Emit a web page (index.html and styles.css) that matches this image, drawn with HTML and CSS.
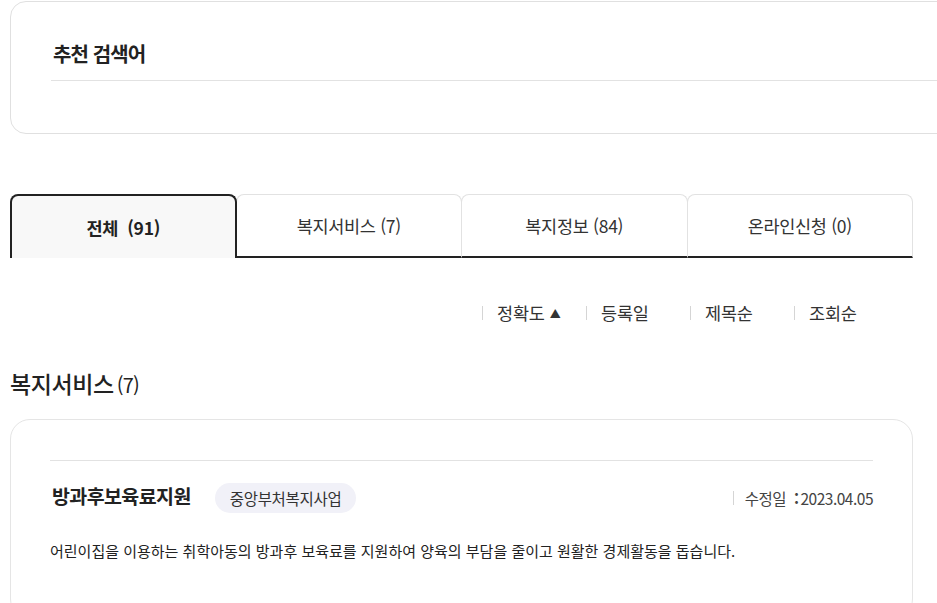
FILE: index.html
```html
<!DOCTYPE html>
<html lang="ko">
<head>
<meta charset="utf-8">
<link rel="stylesheet" href="styles.css">
</head>
<body>
<div class="page">
  <section class="recommend">
    <h2 class="recommend-title">추천 검색어</h2>
    <div class="recommend-line"></div>
  </section>

  <nav class="tabs">
    <div class="tab active">전체&nbsp; (91)</div>
    <div class="tab">복지서비스 (7)</div>
    <div class="tab">복지정보 (84)</div>
    <div class="tab">온라인신청 (0)</div>
  </nav>

  <div class="sort">
    <span class="sort-item">정확도 <span class="tri">▲</span></span>
    <span class="sort-item">등록일</span>
    <span class="sort-item">제목순</span>
    <span class="sort-item">조회순</span>
  </div>

  <h3 class="section-title">복지서비스<span class="count">(7)</span></h3>

  <article class="card">
    <div class="card-line"></div>
    <div class="card-head">
      <div class="card-left">
        <span class="card-title">방과후보육료지원</span>
        <span class="badge">중앙부처복지사업</span>
      </div>
      <div class="card-date">수정일 <span class="colon">:</span>2023.04.05</div>
    </div>
    <p class="card-desc">어린이집을 이용하는 취학아동의 방과후 보육료를 지원하여 양육의 부담을 줄이고 원활한 경제활동을 돕습니다.</p>
  </article>
</div>
</body>
</html>
```

FILE: styles.css
```css
* { box-sizing: border-box; }
html, body { margin: 0; padding: 0; background: #fff; overflow: hidden; }
body {
  font-family: "Noto Sans CJK KR", "Noto Sans", sans-serif;
  color: #222;
}
.page {
  padding: 1px 0 0 10px;
  width: 913px;
}
.recommend {
  width: 960px;
  height: 133px;
  border: 1px solid #e0e0e0;
  border-radius: 16px;
  padding: 34px 0 0 40px;
}
.recommend-title {
  margin: 0 0 0 2px;
  font-size: 20px;
  font-weight: 700;
  line-height: 36px;
  color: #222;
  letter-spacing: -0.9px;
}
.recommend-line {
  margin-top: 8px;
  height: 1px;
  background: #e2e2e2;
}
.tabs {
  display: flex;
  margin-top: 60px;
  height: 64px;
}
.tab {
  flex: 1 1 25%;
  min-width: 0;
  display: flex;
  align-items: center;
  justify-content: center;
  border: 1px solid #e2e2e2;
  border-bottom: 2px solid #222;
  border-radius: 8px 8px 0 0;
  font-size: 17.5px;
  color: #333;
  letter-spacing: -0.3px;
  padding-top: 0;
}
.tab + .tab { margin-left: -1px; }
.tab.active {
  border: 2px solid #222;
  border-bottom: none;
  background: #f8f8f8;
  font-weight: 700;
  color: #222;
  position: relative;
  z-index: 1;
}
.sort {
  display: flex;
  justify-content: flex-end;
  margin-top: 42px;
  height: 26px;
  padding-right: 15px;
}
.sort-item {
  width: 104px;
  display: flex;
  align-items: center;
  font-size: 17.5px;
  color: #333;
  line-height: 26px;
  padding-left: 15px;
  position: relative;
  letter-spacing: -0.2px;
}
.sort-item::before {
  content: "";
  position: absolute;
  left: 0;
  top: 6px;
  width: 1px;
  height: 14px;
  background: #d5d5d5;
}
.tri { font-size: 11px; margin-left: 5px; color: #333; }
.section-title {
  margin: 42px 0 0 0;
  font-size: 23px;
  font-weight: 500;
  line-height: 30px;
  color: #222;
  letter-spacing: -0.4px;
}
.count { font-size: 20px; font-weight: 400; margin-left: 3px; letter-spacing: -0.8px; }
.card {
  margin-top: 19px;
  border: 1px solid #e5e5e5;
  border-radius: 20px;
  padding: 40px 39px 0 39px;
  height: 200px;
}
.card-line { height: 1px; background: #e2e2e2; }
.card-head {
  display: flex;
  align-items: center;
  justify-content: space-between;
  margin-top: 21px;
  height: 32px;
}
.card-left { display: flex; align-items: center; }
.card-title {
  font-size: 19.5px;
  font-weight: 700;
  color: #222;
  margin-left: 2px;
  letter-spacing: -0.6px;
  position: relative;
  top: -3px;
}
.badge {
  margin-left: 24px;
  height: 30px;
  padding: 0 15px;
  border-radius: 15px;
  background: #f1f1f8;
  font-size: 15.5px;
  color: #333;
  display: flex;
  align-items: center;
  letter-spacing: -0.3px;
}
.card-date {
  font-size: 15.5px;
  color: #444;
  padding-left: 12px;
  position: relative;
  letter-spacing: -0.5px;
}
.card-date::before {
  content: "";
  position: absolute;
  left: 0;
  top: 4px;
  width: 1px;
  height: 14px;
  background: #d5d5d5;
}
.colon { margin: 0 2px 0 4px; font-weight: 700; }
.card-desc {
  margin: 26px 0 0 0;
  font-size: 15px;
  color: #222;
  letter-spacing: 0;
}
```
